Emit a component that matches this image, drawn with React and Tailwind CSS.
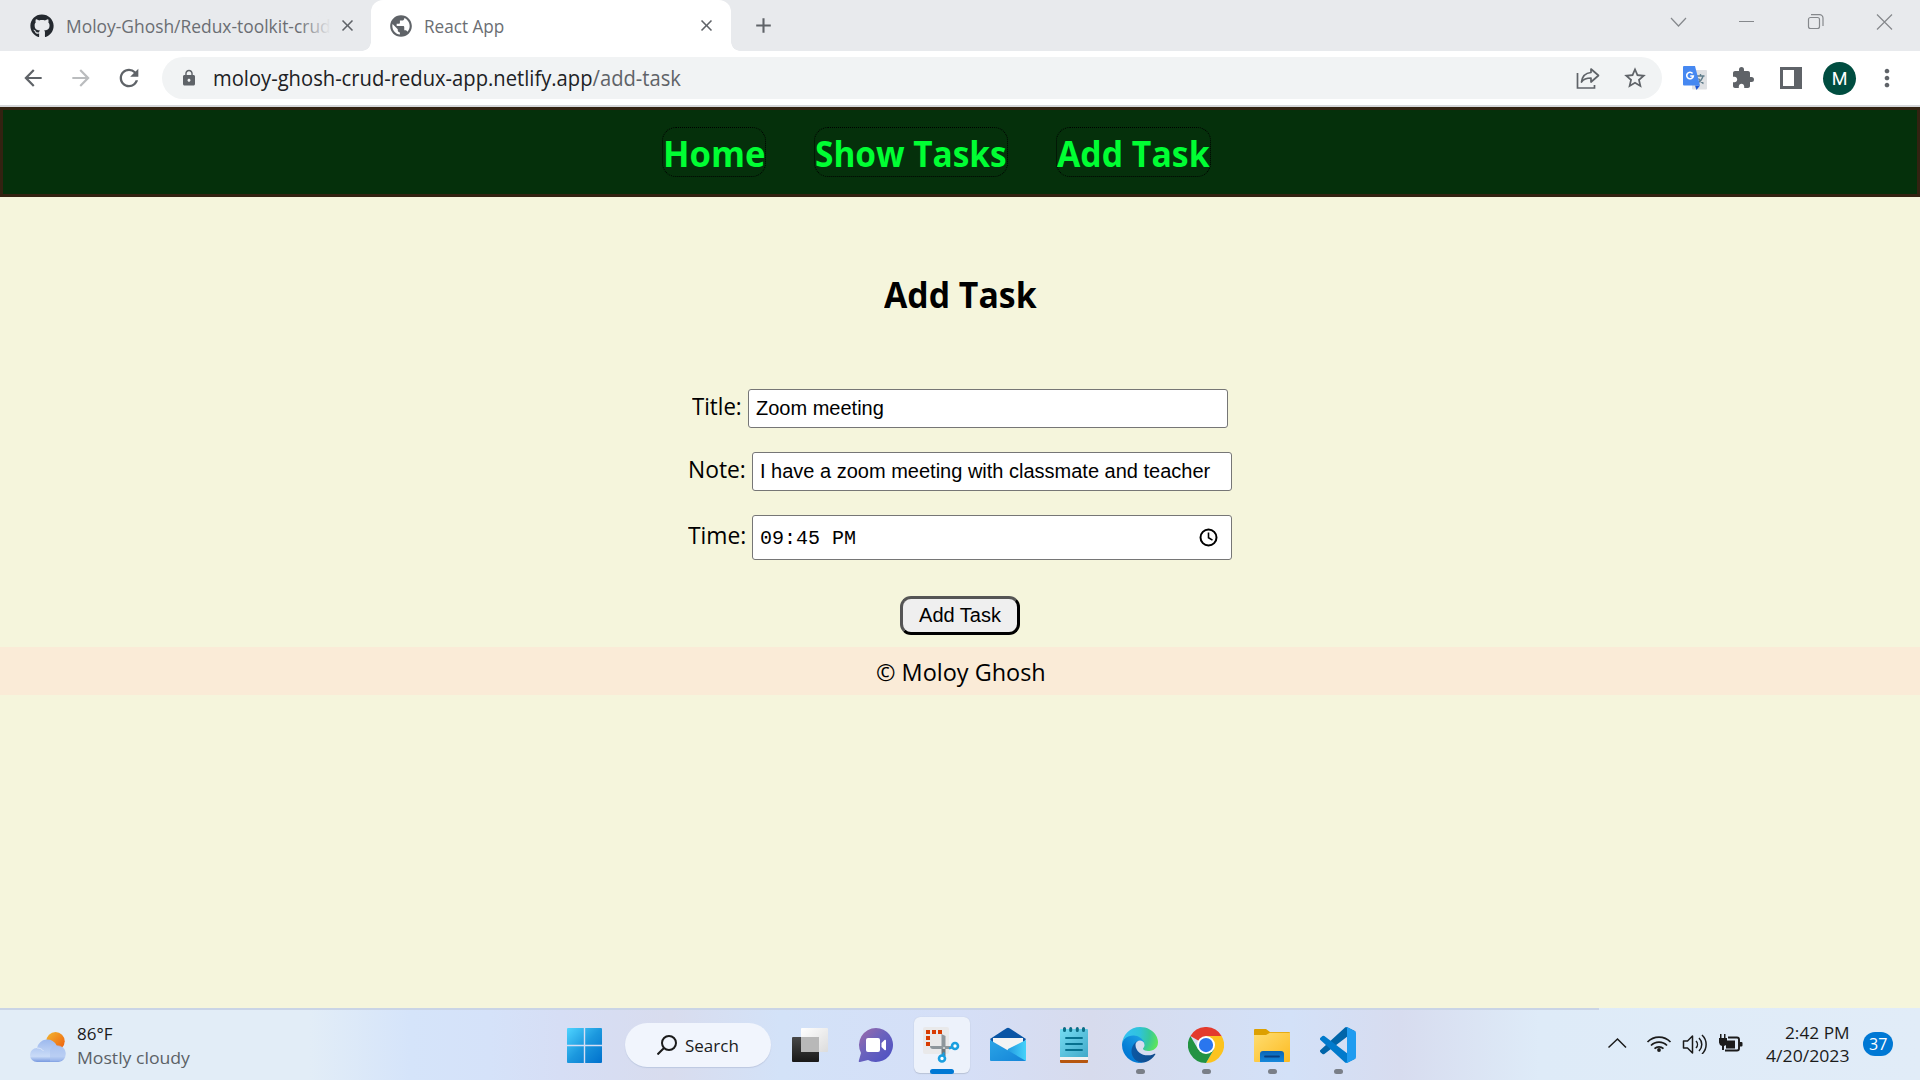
import { useLayoutEffect, useRef, useState } from "react";
import { FaGithub } from "react-icons/fa";
import {
  MdPublic, MdClose, MdAdd, MdLock, MdArrowBack, MdArrowForward, MdRefresh,
  MdStarBorder, MdExtension, MdMoreVert,
} from "react-icons/md";

const UI = "font-['Open_Sans','Noto_Sans',sans-serif]";

// Single line of text condensed or widened to fill the width given by its class.
function Fit({ className = "", children }) {
  const box = useRef(null);
  const inner = useRef(null);
  const [scale, setScale] = useState(1);
  useLayoutEffect(() => {
    const fit = () => {
      if (inner.current && inner.current.offsetWidth)
        setScale(box.current.clientWidth / inner.current.offsetWidth);
    };
    fit();
    document.fonts?.ready.then(fit);
  }, []);
  return (
    <span ref={box} className={`block shrink-0 whitespace-nowrap ${className}`}>
      <span ref={inner} className="inline-block origin-left align-top" style={{ transform: `scaleX(${scale})` }}>
        {children}
      </span>
    </span>
  );
}

function TabStrip() {
  return (
    <div className="flex h-[51px] bg-[#e8eaed] text-[#5f6368]">
      <div className="flex w-[371px] shrink-0 items-center pl-[30px]">
        <FaGithub className="size-6 shrink-0 text-[#24292f]" />
        <div className="relative ml-3 w-[265px] overflow-hidden">
          <Fit className="w-[265px] text-[18px] leading-6 text-[#6b6e73]">Moloy-Ghosh/Redux-toolkit-crud</Fit>
          <div className="absolute inset-y-0 right-0 w-8 bg-linear-to-r from-transparent to-[#e8eaed]" />
        </div>
        <MdClose className="ml-[7px] size-[19px]" />
        <div className="ml-auto size-[9px] self-end bg-[radial-gradient(circle_at_0_0,transparent_8.5px,white_9px)]" />
      </div>
      <div className="flex w-[360px] shrink-0 items-center rounded-t-[12px] bg-white pr-[15px] pl-[17px]">
        <MdPublic className="size-[26px] shrink-0" />
        <Fit className="ml-[10px] w-[80px] text-[18px] leading-6 text-[#6b6e73]">React App</Fit>
        <MdClose className="ml-auto size-[19px]" />
      </div>
      <div className="flex flex-1 items-center">
        <div className="mr-[11px] size-[9px] self-end bg-[radial-gradient(circle_at_100%_0,transparent_8.5px,white_9px)]" />
        <MdAdd className="size-[25px]" />
        <svg className="mb-[7px] ml-auto h-4 w-[224px]" viewBox="0 0 224 16" fill="none" stroke="#85888c" strokeWidth="1.2">
          <path d="M1 4l7.500 8L16 4M69 7.500h15" />
          <rect x="138.500" y="3.500" width="11" height="11" rx="2" />
          <path d="M141 .600h8.500a3.500 3.500 0 0 1 3.500 3.500V12M207 .500l15 15M222 .500l-15 15" />
        </svg>
        <div className="w-[26px]" />
      </div>
    </div>
  );
}

function Toolbar() {
  return (
    <div className="flex h-[54px] items-center bg-white text-[#5f6368]">
      <MdArrowBack className="ml-[20px] size-[26px]" />
      <MdArrowForward className="ml-[22px] size-[26px] text-[#babcbe]" />
      <MdRefresh className="ml-[21px] size-[28px]" />
      <div className="ml-[19px] flex h-[42px] w-[1500px] items-center rounded-full bg-[#f1f3f4] pl-[18px]">
        <MdLock className="size-[18px]" />
        <Fit className="ml-[15px] w-[468px] text-[21px] leading-[28px] text-[#202124]">
          moloy-ghosh-crud-redux-app.netlify.app<span className="text-[#5f6368]">/add-task</span>
        </Fit>
        <svg className="ml-auto size-6" viewBox="0 0 24 24" fill="none" stroke="#5f6368" strokeWidth="1.7">
          <path d="M1.500 7v15h17v-3" />
          <path d="M15 3l7.500 6.500L15 16v-4c-4.500 0-7.500 1-9.500 4 .6-5 3.500-9 9.500-9.500z" strokeLinejoin="round" />
        </svg>
        <MdStarBorder className="mr-[14px] ml-[22px] size-[26px]" />
      </div>
      <svg className="ml-[21px] size-6" viewBox="0 0 24 24">
        <rect x="9" y="4" width="15" height="19.500" rx="1" fill="#dfe1e4" />
        <path d="M13.500 10h8M17.500 8v2M20 10c-.7 3-3 5.500-5.500 7M15.500 12.500c1 2 3 4 5 5" stroke="#607d8b" strokeWidth="1.400" fill="none" />
        <path d="M12 19.500h5L13.500 24z" fill="#1a56d6" />
        <path d="M1 0h11l5 19.500H1a1 1 0 0 1-1-1V1a1 1 0 0 1 1-1z" fill="#4688f1" />
        <path d="M9.600 7.400A3.300 3.300 0 1 0 10.300 10H7.300" fill="none" stroke="#fff" strokeWidth="1.600" />
      </svg>
      <MdExtension className="ml-[24px] size-6" />
      <svg className="ml-[25px] h-[22px] w-[22px]" viewBox="0 0 22 22">
        <path d="M0 0h22v22H0zM3 3v16h11V3z" fill="#5f6368" fillRule="evenodd" />
      </svg>
      <div className="ml-[21px] flex size-[33px] items-center justify-center rounded-full bg-[#004d40] font-[Roboto,sans-serif] text-[18px] text-white">M</div>
      <MdMoreVert className="ml-[17px] size-[28px]" />
    </div>
  );
}

function NavBar() {
  const box = "rounded-[14px] border border-dotted border-black h-[50px] pt-[2px] leading-[48px]";
  return (
    <nav className="flex h-[90px] items-center gap-12 border-[3px] border-[#332211] bg-[#05300b] pl-[659px] text-[36px] font-bold text-[#00ff33]">
      <Fit className={`${box} w-[104px]`}>Home</Fit>
      <Fit className={`${box} w-[194px]`}>Show Tasks</Fit>
      <Fit className={`${box} w-[155px]`}>Add Task</Fit>
    </nav>
  );
}

function TaskForm() {
  const field = "flex w-[480px] items-center rounded-[3px] border border-[#767676] bg-white";
  const label = "mr-[6px] mb-[6px] text-[24px] leading-[30px]";
  return (
    <main className="flex flex-col items-center text-black">
      <h2 className="mt-[74px] text-[36px] leading-[48px] font-bold"><Fit className="w-[153px]">Add Task</Fit></h2>
      <div className="mt-[70px] flex items-center">
        <Fit className={`${label} w-[50px]`}>Title:</Fit>
        <div className={`${field} h-[39px] pb-[2px] pl-[7px] font-['Liberation_Sans',sans-serif] text-[20px] leading-6`}>
          <Fit className="w-[128px]">Zoom meeting</Fit>
        </div>
      </div>
      <div className="mt-[24px] flex items-center">
        <Fit className={`${label} w-[58px]`}>Note:</Fit>
        <div className={`${field} h-[39px] pb-[2px] pl-[7px] font-['Liberation_Sans',sans-serif] text-[20px] leading-6`}>
          <Fit className="w-[450px]">I have a zoom meeting with classmate and teacher</Fit>
        </div>
      </div>
      <div className="mt-[24px] flex items-center">
        <Fit className={`${label} w-[58px]`}>Time:</Fit>
        <div className={`${field} h-[45px] justify-between pr-[13px] pl-[7px] font-['Liberation_Mono',monospace] text-[20px] leading-6`}>
          <Fit className="mt-[3px] w-[96px]">09:45 PM</Fit>
          <svg className="size-[19px]" viewBox="0 0 19 19" fill="none" stroke="#000" strokeWidth="2">
            <circle cx="9.500" cy="9.500" r="8" />
            <path d="M9.500 4.500v5.300l4 2.300" strokeWidth="1.600" />
          </svg>
        </div>
      </div>
      <button className="mt-[36px] flex h-[39px] w-[120px] items-center justify-center rounded-[11px] border-[3px] border-t-[#555] border-r-black border-b-black border-l-[#555] bg-[#efefef] pb-[2px] font-['Liberation_Sans',sans-serif] text-[20px] leading-6">
        <Fit className="w-[82px]">Add Task</Fit>
      </button>
      <footer className="mt-3 flex h-12 w-full justify-center bg-[#faebd7] pt-[9px] pl-[2px] text-[24px] leading-[32px]">
        <Fit className="w-[170px]">© Moloy Ghosh</Fit>
      </footer>
    </main>
  );
}

function StartIcon() {
  return (
    <svg className="size-[35px]" viewBox="0 0 35 35">
      <defs><linearGradient id="st" x1="0" y1="0" x2="1" y2="1"><stop stopColor="#4fd4ff" /><stop offset=".5" stopColor="#1c98de" /><stop offset="1" stopColor="#0070cc" /></linearGradient></defs>
      <path d="M1 0h15.800v16.800H0V1a1 1 0 0 1 1-1zM18.200 0H34a1 1 0 0 1 1 1v15.800H18.200zM0 18.200h16.800V35H1a1 1 0 0 1-1-1zM18.200 18.200H35V34a1 1 0 0 1-1 1H18.200z" fill="url(#st)" />
    </svg>
  );
}

function TaskViewIcon() {
  return (
    <svg className="size-9" viewBox="0 0 36 36">
      <defs>
        <linearGradient id="tv" x1="0" y1="0" x2="0" y2="1"><stop stopColor="#484848" /><stop offset="1" stopColor="#181818" /></linearGradient>
        <linearGradient id="tw" x1="0" y1="0" x2="1" y2="1"><stop stopColor="#fff" /><stop offset="1" stopColor="#dcdcdc" /></linearGradient>
      </defs>
      <rect x="0" y="10" width="27" height="25" rx="1" fill="url(#tv)" />
      <rect x="9" y="1" width="27" height="24" rx="1" fill="url(#tw)" />
      <path d="M9 10h18v15H9z" fill="#b8b8b8" />
    </svg>
  );
}

function ChatIcon() {
  return (
    <svg className="size-9" viewBox="0 0 36 36">
      <defs><linearGradient id="ch" x1="0" y1="0" x2="1" y2="1"><stop stopColor="#a06ba8" /><stop offset=".45" stopColor="#6a62bd" /><stop offset="1" stopColor="#4a4fc4" /></linearGradient></defs>
      <path d="M18 1a17 17 0 1 1-8 32L2 35c-1 .2-1.500-.5-1.200-1.300L3 26A17 17 0 0 1 18 1z" fill="url(#ch)" />
      <rect x="8" y="11" width="14" height="14" rx="2" fill="#fff" />
      <path d="M23.500 16l3-3c.8-.6 1.500-.3 1.500.5v9c0 .8-.7 1.100-1.500.5l-3-3z" fill="#fff" />
    </svg>
  );
}

function SnipIcon() {
  return (
    <svg className="size-9 overflow-visible" viewBox="0 0 36 36">
      <rect x="-1" y="0" width="26" height="27" rx="2" fill="#e9e9ea" />
      <path d="M17.500 7l4 2v13h-4zM6 19h21v3H9c-2 0-3-1-3-3z" fill="#8d969c" />
      <path d="M17.500 22h4v7h-4z" fill="#6d767c" />
      <path d="M2 3h4v4H2zM8 3h4v4H8zM14 3h4v4h-4zM2 9h4v4H2zM2 15h4v4H2z" fill="#d83b01" />
      <circle cx="18" cy="31.500" r="3" fill="#fff" stroke="#1a9fe0" strokeWidth="2.600" />
      <circle cx="31" cy="19" r="3" fill="#fff" stroke="#1a9fe0" strokeWidth="2.600" />
      <path d="M25 21.500l3-1M20 25.500l-1 3" stroke="#1a9fe0" strokeWidth="2" />
      <circle cx="20" cy="21" r="1" fill="#ddd" />
    </svg>
  );
}

function MailIcon() {
  return (
    <svg className="size-9" viewBox="0 0 36 36">
      <defs>
        <linearGradient id="ml" x1="0" y1="0" x2="1" y2="1"><stop stopColor="#2ba5e6" /><stop offset="1" stopColor="#1484d8" /></linearGradient>
        <linearGradient id="mr" x1="0" y1="0" x2="1" y2="0"><stop stopColor="#1c90dc" /><stop offset="1" stopColor="#45d2fa" /></linearGradient>
      </defs>
      <path d="M0 12L16.500 1.300a3 3 0 0 1 3 0L36 12l-4 6H4z" fill="#0a55a5" />
      <path d="M3 11h30v6L18 24 3 17z" fill="#f4f4f4" />
      <path d="M36 13v20a1 1 0 0 1-1 1H14L18 22z" fill="url(#mr)" />
      <path d="M0 13l36 21H1a1 1 0 0 1-1-1z" fill="url(#ml)" />
    </svg>
  );
}

function NotepadIcon() {
  return (
    <svg className="size-9" viewBox="0 0 36 36">
      <defs><linearGradient id="np" x1="0" y1="0" x2="1" y2="1"><stop stopColor="#74dcf2" /><stop offset="1" stopColor="#42a9c9" /></linearGradient></defs>
      <path d="M4 32h28v3a1 1 0 0 1-1 1H5a1 1 0 0 1-1-1z" fill="#b6560f" />
      <path d="M4 29h28v4H4z" fill="#f2f2f2" />
      <path d="M5 2h26a1 1 0 0 1 1 1v27H4V3a1 1 0 0 1 1-1z" fill="url(#np)" />
      <path d="M8.500 1.500v2M14.700 1.500v2M21.300 1.500v2M27.500 1.500v2" stroke="#0b6c85" strokeWidth="3" strokeLinecap="round" />
      <path d="M10 11h16M10 17h16M10 23h16" stroke="#06718f" strokeWidth="1.900" strokeLinecap="round" />
    </svg>
  );
}

function EdgeIcon() {
  return (
    <svg className="size-9" viewBox="0 0 256 256">
      <defs>
        <linearGradient id="ea" x1="63" y1="177" x2="242" y2="177" gradientUnits="userSpaceOnUse"><stop stopColor="#0c59a4" /><stop offset="1" stopColor="#114a8b" /></linearGradient>
        <linearGradient id="eb" x1="157" y1="100" x2="46" y2="221" gradientUnits="userSpaceOnUse"><stop stopColor="#1b9de2" /><stop offset=".2" stopColor="#1595df" /><stop offset=".7" stopColor="#0680d7" /><stop offset="1" stopColor="#0078d4" /></linearGradient>
        <radialGradient id="ec" cx="26" cy="45" r="250" gradientUnits="userSpaceOnUse"><stop stopColor="#35c1f1" /><stop offset=".4" stopColor="#2fc3db" /><stop offset=".68" stopColor="#36c99a" /><stop offset="1" stopColor="#66eb4c" /></radialGradient>
      </defs>
      <path d="M231 190.500c-3.400 1.800-6.900 3.400-10.500 4.700a101.700 101.700 0 0 1-35.900 6.500c-47.300 0-88.500-32.500-88.500-74.300 0-11.400 6.400-21.900 16.600-27.500-42.800 1.800-53.800 46.400-53.800 72.500 0 73.900 68.100 81.400 82.800 81.400 7.900 0 19.800-2.300 27-4.600l1.300-.4a128.300 128.300 0 0 0 66.600-52.800 4 4 0 0 0-5.600-5.500z" fill="url(#ea)" />
      <path d="M105.700 241.400A79.200 79.200 0 0 1 83 220.100a80.700 80.700 0 0 1 29.500-120.200c3.200-1.500 8.500-4.100 15.600-4a32.400 32.400 0 0 1 25.700 13 31.900 31.900 0 0 1 6.300 18.700c0-.2 24.500-79.600-80-79.600-43.900 0-80 41.700-80 78.200a130.200 130.200 0 0 0 12.100 56 128 128 0 0 0 156.400 67 75.600 75.600 0 0 1-62.800-7.800z" fill="url(#eb)" />
      <path d="M152.300 148.900c-.8 1-3.300 2.500-3.300 5.700 0 2.600 1.700 5.100 4.700 7.200 14.400 10 41.500 8.700 41.600 8.700a59.600 59.600 0 0 0 30.300-8.300A61.400 61.400 0 0 0 256 109.200c.3-22.400-8-37.300-11.300-43.900C223.500 23.900 177.700 0 128 0A128 128 0 0 0 0 126.200c.5-36.500 36.800-66 80-66 3.500 0 23.500.3 42 10.100a72.600 72.600 0 0 1 30.900 29.300c6.100 10.600 7.200 24.100 7.200 29.500s-2.700 13.300-7.800 19.800z" fill="url(#ec)" />
    </svg>
  );
}

function ChromeIcon() {
  return (
    <svg className="size-9" viewBox="0 0 48 48">
      <path d="M24 24L3.200 12A24 24 0 0 1 44.800 12z" fill="#e33b2e" />
      <path d="M24 12h20.800A24 24 0 0 1 24 48l10.400-18z" fill="#fcc31e" />
      <path d="M13.600 30L3.200 12A24 24 0 0 0 24 48l10.400-18z" fill="#229342" />
      <circle cx="24" cy="24" r="12" fill="#fff" />
      <circle cx="24" cy="24" r="9.500" fill="#2a76ee" />
    </svg>
  );
}

function FolderIcon() {
  return (
    <svg className="size-9" viewBox="0 0 36 36">
      <defs>
        <linearGradient id="fo" x1="0" y1="0" x2="1" y2="1"><stop stopColor="#ffdd70" /><stop offset="1" stopColor="#fcbb22" /></linearGradient>
        <linearGradient id="fb" x1="0" y1="0" x2="0" y2="1"><stop stopColor="#0a64b5" /><stop offset="1" stopColor="#1588dc" /></linearGradient>
      </defs>
      <path d="M1 2h11l4 3h19a1 1 0 0 1 1 1v6H0V3a1 1 0 0 1 1-1z" fill="#dda000" />
      <path d="M0 8h12l4-2.300h20V34a1 1 0 0 1-1 1H1a1 1 0 0 1-1-1z" fill="url(#fo)" />
      <path d="M6 35V27a3 3 0 0 1 3-3h18a3 3 0 0 1 3 3v8z" fill="url(#fb)" />
      <path d="M11 29.500h14" stroke="#083f80" strokeWidth="1.800" strokeLinecap="round" />
    </svg>
  );
}

function CodeIcon() {
  return (
    <svg className="size-9" viewBox="0 0 100 100">
      <path d="M96.500 10.800L75.900.9a6.200 6.200 0 0 0-7.100 1.200L1.300 63.600a4.200 4.200 0 0 0 0 6.200l5.500 5a4.200 4.200 0 0 0 5.300.2L93.400 13.400c2.700-2.100 6.600-.1 6.600 3.300v-.3a6.300 6.300 0 0 0-3.500-5.600z" fill="#0065a9" />
      <path d="M96.500 89.200l-20.600 9.900a6.200 6.200 0 0 1-7.100-1.200L1.300 36.400a4.200 4.200 0 0 1 0-6.200l5.500-5a4.200 4.200 0 0 1 5.300-.2l81.300 61.600c2.700 2.100 6.600.1 6.600-3.300v.3a6.300 6.300 0 0 1-3.500 5.600z" fill="#007acc" />
      <path d="M75.900 99.100a6.200 6.200 0 0 1-7.100-1.200c2.300 2.300 6.200.7 6.200-2.600V4.700c0-3.300-3.900-4.900-6.200-2.600a6.200 6.200 0 0 1 7.100-1.200l20.600 9.900a6.200 6.200 0 0 1 3.500 5.600v67.200a6.200 6.200 0 0 1-3.500 5.600z" fill="#1f9cf0" />
    </svg>
  );
}

const apps = [
  { Icon: TaskViewIcon },
  { Icon: ChatIcon },
  { Icon: SnipIcon, active: true },
  { Icon: MailIcon },
  { Icon: NotepadIcon },
  { Icon: EdgeIcon, running: true },
  { Icon: ChromeIcon, running: true },
  { Icon: FolderIcon, running: true },
  { Icon: CodeIcon, running: true },
];

function Taskbar() {
  return (
    <div className="mt-auto flex h-[72px] flex-col bg-[linear-gradient(90deg,#e2edf7_0,#e2edf7_310px,#d5e4fa_410px,#d5e2f9_490px,#d6def5_560px,#d8dcee_670px,#d3e2f8_780px,#d5dff7_960px,#d7dbed_1090px,#d3e1f8_1290px,#d7dcef_1400px,#deebf8_1540px,#e1ecf8_1920px)]">
      <div className="h-[2px] w-[1599px] bg-[#c9d4e6]" />
      <div className="flex flex-1 text-[#1b1b1b]">
        <div className="flex w-[567px] shrink-0 pt-[22px] pl-[30px]">
          <svg className="h-[30px] w-9" viewBox="0 0 36 30">
            <defs>
              <linearGradient id="su" x1="0" y1="0" x2="1" y2="1"><stop stopColor="#f2b832" /><stop offset="1" stopColor="#ef5b0b" /></linearGradient>
              <linearGradient id="cl" x1="0" y1="0" x2="0" y2="1"><stop stopColor="#9db9ee" /><stop offset=".75" stopColor="#c9dbf7" /><stop offset="1" stopColor="#7799e0" /></linearGradient>
            </defs>
            <circle cx="25.500" cy="9.200" r="9.200" fill="url(#su)" />
            <path d="M7 30a7 7 0 0 1 0-14A10.500 10.500 0 0 1 27 14a8 8 0 0 1 1.500 16z" fill="url(#cl)" />
            <path d="M20 18c1-3 4-5 7.500-5a8.300 8.300 0 0 1 1 16.500H20z" fill="#aac2ef" opacity=".5" />
            <path d="M7 16c3 0 5 1 6.500 3" stroke="#dbe7fb" strokeWidth="1" fill="none" />
          </svg>
          <div className="-mt-[10px] ml-[11px]">
            <Fit className="w-[36px] text-[17px] leading-6">86°F</Fit>
            <Fit className="w-[113px] text-[17px] leading-6 text-[#5b6166]">Mostly cloudy</Fit>
          </div>
        </div>
        <div className="flex items-center">
          <StartIcon />
          <div className="ml-[23px] flex h-11 w-[146px] items-center rounded-full bg-[#f1f5fd] pl-8 shadow-[0_1px_1px_#bdc8e0]">
            <svg className="size-5" viewBox="0 0 20 20" fill="none" stroke="#1b1b1b" strokeWidth="2">
              <circle cx="12" cy="8" r="7" /><path d="M7 13l-6.500 6.500" />
            </svg>
            <Fit className="mt-[2px] ml-2 w-[54px] text-[17px] leading-6">Search</Fit>
          </div>
          <div className="ml-[6px] flex">
            {apps.map(({ Icon, active, running }, i) => (
              <div key={i} className="flex w-[66px] justify-center">
                <div className={`relative flex size-14 items-center justify-center rounded-[6px] ${active ? "bg-[#edf2fb] shadow-[0_1px_1px_#b8c2d6,0_0_1px_#b8c2d6]" : ""}`}>
                  <Icon />
                  {active && <div className="absolute -bottom-px h-[5px] w-6 rounded-full bg-[#0078d4]" />}
                  {running && <div className="absolute -bottom-px h-[5px] w-[9px] rounded-full bg-[#7a7f88]" />}
                </div>
              </div>
            ))}
          </div>
        </div>
        <div className="flex flex-1 pl-[237px]">
          <svg className="mt-[20px] h-6 w-[136px] shrink-0" viewBox="0 0 136 24" fill="none" stroke="#1b1b1b" strokeWidth="1.500">
            <path d="M.5 17.500L9.500 9l8.500 8.500" />
            <path d="M39.500 12a16 16 0 0 1 23 0M43 15.500a11 11 0 0 1 16 0M46.500 18.700a6.500 6.500 0 0 1 9 0" strokeWidth="1.700" />
            <circle cx="51" cy="20" r="1.900" fill="#1b1b1b" stroke="none" />
            <path d="M75.500 11h4l5-5v17l-5-5h-4z" strokeLinejoin="round" />
            <path d="M88 11a5 5 0 0 1 0 7M91 8a9 9 0 0 1 0 13M94 5a13 13 0 0 1 0 19" />
            <path d="M120 7.500h9a2 2 0 0 1 2 2v9a2 2 0 0 1-2 2h-12" strokeWidth="1.900" />
            <path d="M118 10.500h9v8h-9zM131.500 12h2a1 1 0 0 1 1 1v2.500a1 1 0 0 1-1 1h-2zM111 8h8v4.500a4 4 0 0 1-3 3.500v4h-2v-4a4 4 0 0 1-3-3.500zM112 4h1.500v4H112zM116 4h1.500v4H116z" fill="#1b1b1b" stroke="none" />
          </svg>
          <div className="mt-[11px] flex w-[106px] shrink-0 flex-col items-end">
            <Fit className="w-[65px] text-[17px] leading-[23px]">2:42 PM</Fit>
            <Fit className="w-[84px] text-[17px] leading-[23px]">4/20/2023</Fit>
          </div>
          <div className="mt-[22px] ml-[13px] flex h-6 w-[30px] shrink-0 items-center justify-center rounded-full bg-[#0078d4] text-[16px] leading-6 text-white">
            <Fit className="w-[18px]">37</Fit>
          </div>
        </div>
      </div>
    </div>
  );
}

export default function App() {
  return (
    <div className={`flex h-[1080px] w-[1920px] flex-col overflow-hidden bg-[#f5f5dc] ${UI}`}>
      <TabStrip />
      <Toolbar />
      <div className="h-[2px] bg-[#d5d7da]" />
      <NavBar />
      <TaskForm />
      <Taskbar />
    </div>
  );
}
